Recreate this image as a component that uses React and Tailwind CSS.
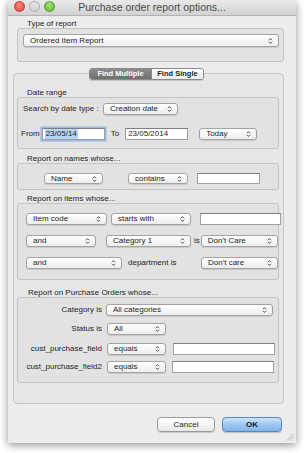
import React from "react";

const Arrows = () => (
	<svg width="5" height="8" viewBox="0 0 5 8" className="shrink-0">
		<path d="M1 3.2 L2.5 1.6 L4 3.2" fill="none" stroke="#3a3a3a" strokeWidth="0.9" />
		<path d="M1 4.8 L2.5 6.4 L4 4.8" fill="none" stroke="#3a3a3a" strokeWidth="0.9" />
	</svg>
);

const Popup = ({ text, className = "" }) => (
	<div
		className={`flex shrink-0 items-center justify-between rounded-[3px] border border-[#a3a3a3] bg-linear-to-b from-white to-[#ededed] pl-[6px] pr-[5px] text-[8px] leading-none text-[#1e1e1e] shadow-[0_1px_1px_rgba(0,0,0,0.12)] ${className}`}>
		<span>{text}</span>
		<Arrows />
	</div>
);

const Field = ({ className = "", children }) => (
	<div
		className={`flex shrink-0 items-center border border-[#a0a0a0] border-t-[#808080] bg-white pl-[2px] text-[8px] leading-none text-[#1e1e1e] ${className}`}>
		{children}
	</div>
);

const GroupLabel = ({ children, className = "" }) => (
	<div className={`h-[9px] text-[8px] leading-[9px] text-[#222] ${className}`}>
		{children}
	</div>
);

const Box = ({ className = "", children }) => (
	<div
		className={`rounded-[3px] border border-[#c4c4c4] bg-[#e2e2e2] ${className}`}>
		{children}
	</div>
);

export default function App() {
	return (
		<div className="h-[453px] w-[304px] overflow-hidden bg-white font-['Liberation_Sans',Arial,sans-serif]">
			<div className="relative ml-[8px] flex h-[443px] w-[288px] flex-col rounded-t-[5px] bg-[#ececec] shadow-[0_2px_8px_rgba(0,0,0,0.45)]">
				{/* title bar */}
				<div className="relative flex h-[16px] items-center justify-center rounded-t-[5px] border-b border-[#b3b3b3] bg-linear-to-b from-[#e9e9e9] to-[#d2d2d2]">
					<div className="absolute left-[6px] top-[1px] flex gap-[4px]">
						<div className="h-[11px] w-[11px] rounded-full border border-[#c4382f] bg-radial-[at_50%_30%] from-[#ff8c80] to-[#e0443a]" />
						<div className="h-[11px] w-[11px] rounded-full border border-[#a9a9a9] bg-linear-to-b from-[#e8e8e8] to-[#cfcfcf]" />
						<div className="h-[11px] w-[11px] rounded-full border border-[#4f9a2d] bg-radial-[at_50%_30%] from-[#a6e37a] to-[#5cb532]" />
					</div>
					<span className="text-[10.5px] leading-none text-[#4a4a4a]">
						Purchase order report options...
					</span>
				</div>

				{/* type of report */}
				<GroupLabel className="ml-[19px] mt-[3px]">Type of report</GroupLabel>
				<Box className="ml-[9px] w-[267px] pb-[14px] pl-[5px] pr-[4px] pt-[5px]">
					<Popup text="Ordered Item Report" className="h-[13px] w-full" />
				</Box>

				{/* tabbed area */}
				<div className="ml-[5px] mt-[11px] flex w-[271px] flex-col rounded-[4px] border border-[#c6c6c6] bg-[#e6e6e6] pb-[20px]">
					<div className="-mt-[6px] ml-[75px] flex h-[12px] w-[115px] overflow-hidden rounded-[3px] border border-[#8a8a8a] text-[7.5px] font-bold leading-none shadow-[0_1px_1px_rgba(0,0,0,0.15)]">
						<div className="flex w-[61px] items-center justify-center bg-linear-to-b from-[#8d8d8d] to-[#6f6f6f] text-white">
							Find Multiple
						</div>
						<div className="flex flex-1 items-center justify-center border-l border-[#8a8a8a] bg-linear-to-b from-white to-[#ececec] text-[#222]">
							Find Single
						</div>
					</div>

					{/* date range */}
					<GroupLabel className="ml-[13px] mt-[8px]">Date range</GroupLabel>
					<Box className="ml-[3px] w-[262px] pb-[8px] pt-[5px]">
						<div className="flex h-[12px] items-center">
							<span className="ml-[5px] w-[80px] text-[8px] leading-none text-[#1e1e1e]">
								Search by date type :
							</span>
							<Popup text="Creation date" className="h-[12px] w-[75px]" />
						</div>
						<div className="mt-[13px] flex h-[12px] items-center">
							<span className="ml-[3px] text-[8px] leading-none text-[#1e1e1e]">From</span>
							<Field className="ml-[2px] h-[12px] w-[63px] border-[#6e9fd6] border-t-[#6e9fd6] shadow-[0_0_0_1.5px_rgba(120,170,230,0.7)]">
								<span className="bg-[#b5d3f3] px-[1px] py-[1px]">23/05/14</span>
							</Field>
							<span className="ml-[6px] text-[8px] leading-none text-[#1e1e1e]">To</span>
							<Field className="ml-[6px] h-[12px] w-[63px]">23/05/2014</Field>
							<Popup text="Today" className="ml-[11px] h-[12px] w-[58px]" />
						</div>
					</Box>

					{/* names */}
					<GroupLabel className="ml-[13px] mt-[5px]">Report on names whose...</GroupLabel>
					<Box className="ml-[3px] flex w-[262px] items-center pb-[5px] pt-[9px]">
						<Popup text="Name" className="ml-[26px] h-[11px] w-[59px]" />
						<Popup text="contains" className="ml-[25px] h-[11px] w-[60px]" />
						<Field className="ml-[9px] h-[11px] w-[63px]" />
					</Box>

					{/* items */}
					<GroupLabel className="ml-[13px] mt-[4px]">Report on items whose...</GroupLabel>
					<Box className="ml-[3px] flex w-[262px] flex-col gap-[10px] pb-[10px] pt-[9px]">
						<div className="flex h-[12px] items-center">
							<Popup text="Item code" className="ml-[8px] h-[12px] w-[81px]" />
							<Popup text="starts with" className="ml-[4px] h-[12px] w-[80px]" />
							<Field className="ml-[9px] h-[12px] w-[81px]" />
						</div>
						<div className="flex h-[12px] items-center">
							<Popup text="and" className="ml-[8px] h-[12px] w-[70px]" />
							<Popup text="Category 1" className="ml-[10px] h-[12px] w-[85px]" />
							<span className="ml-[3px] text-[8px] leading-none text-[#1e1e1e]">is</span>
							<Popup text="Don't Care" className="ml-[1px] h-[12px] w-[77px]" />
						</div>
						<div className="flex h-[12px] items-center">
							<Popup text="and" className="ml-[8px] h-[12px] w-[96px]" />
							<span className="ml-[6px] w-[73px] text-[8px] leading-none text-[#1e1e1e]">
								department is
							</span>
							<Popup text="Don't care" className="h-[12px] w-[77px]" />
						</div>
					</Box>

					{/* purchase orders */}
					<GroupLabel className="ml-[14px] mt-[8px]">
						Report on Purchase Orders whose...
					</GroupLabel>
					<Box className="ml-[3px] flex w-[262px] flex-col pb-[9px] pt-[6px]">
						<div className="flex h-[12px] items-center">
							<span className="w-[84px] text-right text-[8px] leading-none text-[#1e1e1e]">
								Category is
							</span>
							<Popup text="All categories" className="ml-[4px] h-[12px] w-[167px]" />
						</div>
						<div className="mt-[7px] flex h-[12px] items-center">
							<span className="w-[84px] text-right text-[8px] leading-none text-[#1e1e1e]">
								Status is
							</span>
							<Popup text="All" className="ml-[5px] h-[12px] w-[59px]" />
						</div>
						<div className="mt-[8px] flex h-[12px] items-center">
							<span className="w-[84px] text-right text-[8px] leading-none text-[#1e1e1e]">
								cust_purchase_field
							</span>
							<Popup text="equals" className="ml-[5px] h-[12px] w-[59px]" />
							<Field className="ml-[7px] h-[12px] w-[102px]" />
						</div>
						<div className="mt-[6px] flex h-[12px] items-center">
							<span className="w-[84px] text-right text-[8px] leading-none text-[#1e1e1e]">
								cust_purchase_field2
							</span>
							<Popup text="equals" className="ml-[5px] h-[12px] w-[59px]" />
							<Field className="ml-[6px] h-[12px] w-[102px]" />
						</div>
					</Box>
				</div>

				{/* buttons */}
				<div className="mt-[13px] flex justify-end gap-[7px] pr-[14px]">
					<button className="flex h-[15px] w-[58px] items-center justify-center rounded-[4px] border border-[#9a9a9a] bg-linear-to-b from-white to-[#e9e9e9] text-[8px] leading-none text-[#1e1e1e] shadow-[0_1px_1px_rgba(0,0,0,0.15)]">
						Cancel
					</button>
					<button className="flex h-[15px] w-[60px] items-center justify-center rounded-[4px] border border-[#5b86bd] bg-linear-to-b from-[#cfe5fa] via-[#9cc8f1] to-[#7fb7ec] text-[8px] font-bold leading-none text-[#1a1a1a] shadow-[0_1px_1px_rgba(0,0,0,0.2)]">
						OK
					</button>
				</div>

				{/* resize grip */}
				<svg width="9" height="9" viewBox="0 0 9 9" className="absolute bottom-[2px] right-[2px]">
					<path d="M8.5 2 L2 8.5 M8.5 5 L5 8.5 M8.5 8 L8 8.5" stroke="#a5a5a5" strokeWidth="0.8" />
				</svg>
			</div>
		</div>
	);
}
